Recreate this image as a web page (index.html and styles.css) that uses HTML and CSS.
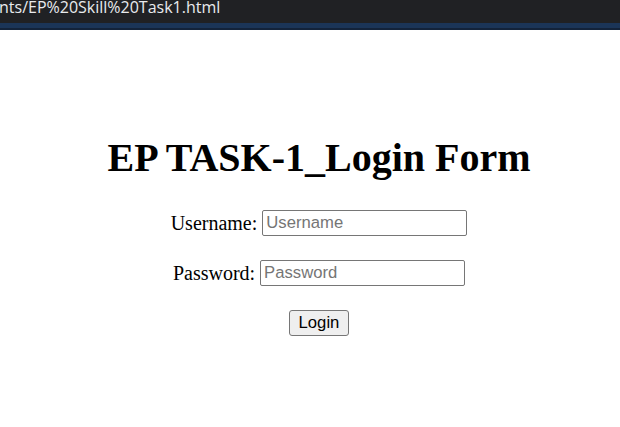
FILE: index.html
```html
<!DOCTYPE html>
<html>
<head>
<meta charset="utf-8">
<title>EP Skill Task1</title>
<link rel="stylesheet" href="styles.css">
</head>
<body>
<div class="urlbar"><span class="url">nts/EP%20Skill%20Task1.html</span></div>
<div class="tabline"></div>
<main class="page">
  <h1 class="title">EP TASK-1_Login Form</h1>
  <form class="form">
    <div class="row"><label class="label" for="u">Username:</label><input class="field" id="u" type="text" placeholder="Username"></div>
    <div class="row"><label class="label" for="p">Password:</label><input class="field" id="p" type="password" placeholder="Password"></div>
    <button class="btn" type="button">Login</button>
  </form>
</main>
</body>
</html>
```

FILE: styles.css
```css
html, body {
  margin: 0;
  padding: 0;
  background: #ffffff;
}
body {
  width: 620px;
  height: 427px;
  overflow: hidden;
}
.urlbar {
  height: 23px;
  background: #202124;
  overflow: hidden;
  white-space: nowrap;
}
.url {
  display: block;
  font-family: "Open Sans", "Noto Sans", sans-serif;
  font-size: 16px;
  line-height: 16px;
  color: #e8eaed;
  margin-top: -1px;
  margin-left: -1px;
}
.tabline {
  height: 5px;
  background: #1b3558;
  border-bottom: 2px solid #13233a;
}
.page {
  display: flex;
  flex-direction: column;
  align-items: center;
  padding: 105px 0 0 18px;
  font-family: "Liberation Serif", "Times New Roman", serif;
  color: #000;
}
.title {
  margin: 0 0 29px;
  font-size: 40px;
  line-height: 46px;
  font-weight: bold;
}
.form {
  display: flex;
  flex-direction: column;
  align-items: center;
  gap: 24px;
}
.row {
  display: flex;
  align-items: center;
  gap: 5px;
  font-size: 20px;
}
.field {
  box-sizing: border-box;
  width: 205px;
  height: 26px;
  margin: 0;
  padding: 1px 3px;
  border: 1px solid #767676;
  border-radius: 2px;
  font-family: "Liberation Sans", Arial, sans-serif;
  font-size: 16.67px;
  color: #000;
  background: #fff;
}
.field::placeholder {
  color: #757575;
}
.btn {
  box-sizing: border-box;
  width: 60px;
  height: 26px;
  margin: 0;
  padding: 0;
  border: 1px solid #767676;
  border-radius: 3px;
  background: #efefef;
  font-family: "Liberation Sans", Arial, sans-serif;
  font-size: 16.67px;
  color: #000;
}
```
